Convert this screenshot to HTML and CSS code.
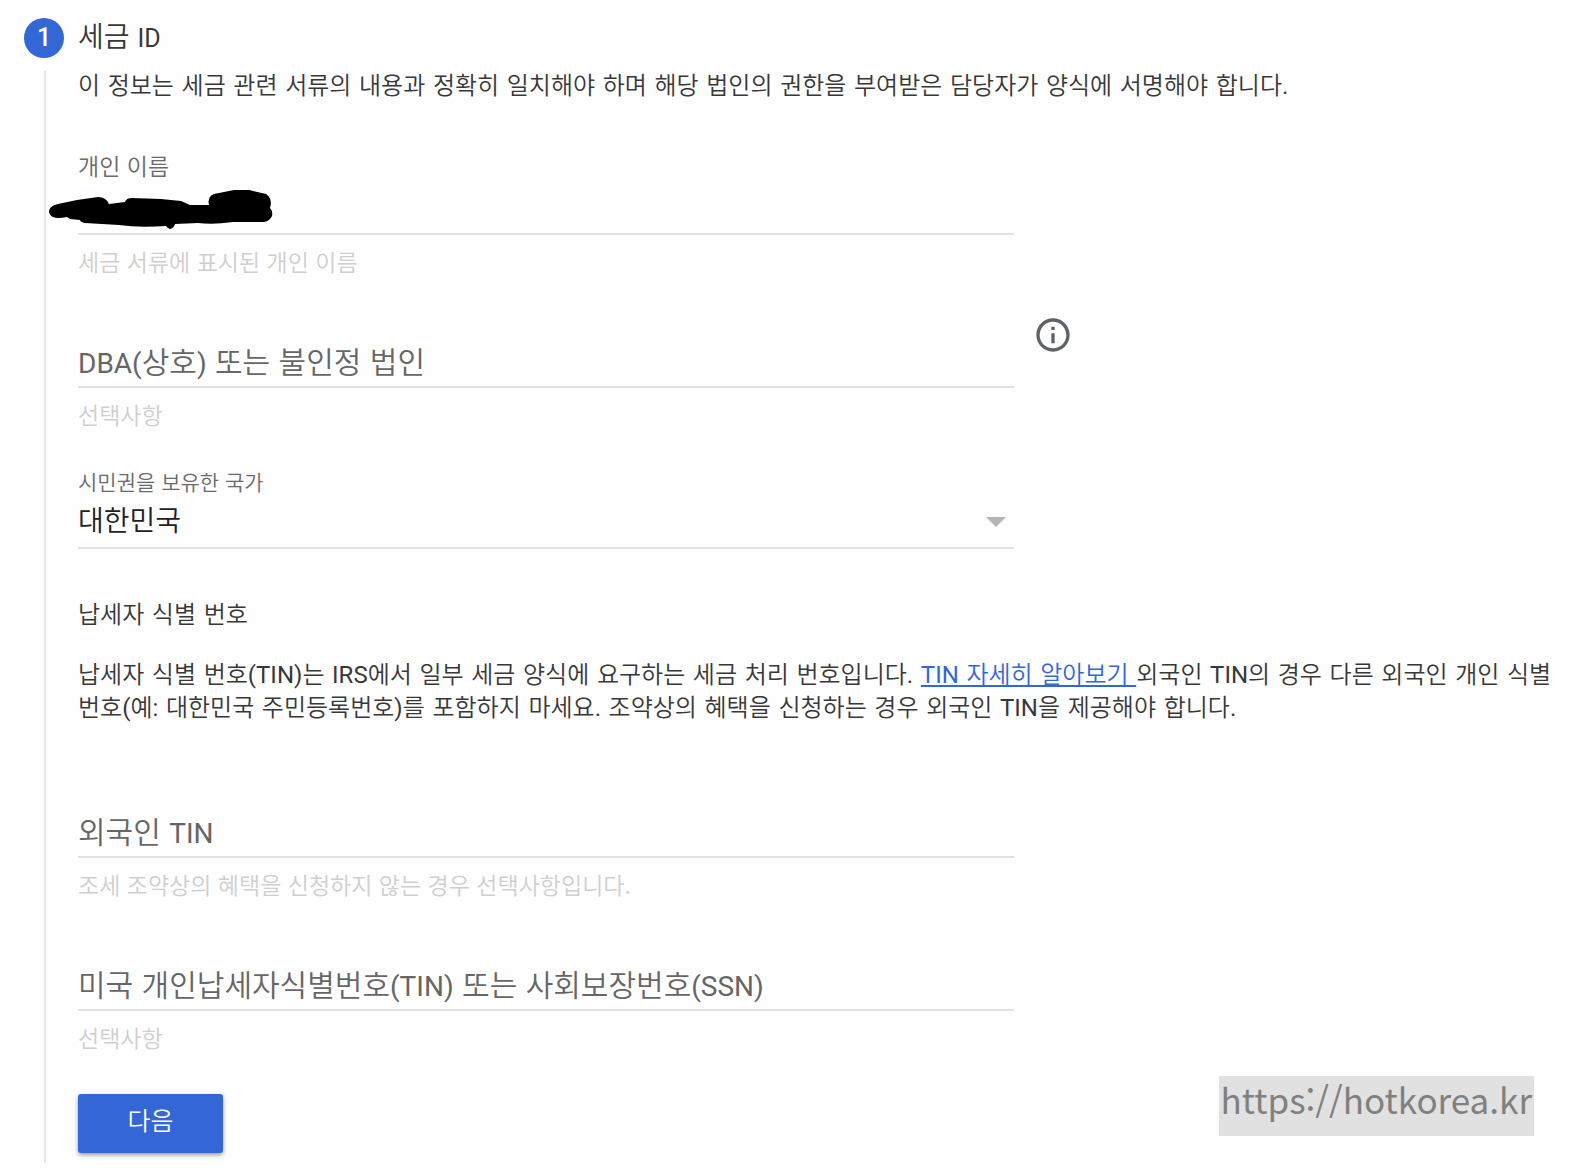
FILE: index.html
```html
<!DOCTYPE html>
<html lang="ko">
<head>
<meta charset="utf-8">
<meta name="viewport" content="width=device-width, initial-scale=1">
<title>세금 ID</title>
<link rel="stylesheet" href="styles.css">
</head>
<body>
<main class="step">
  <header class="step-header">
    <span class="step-number">1</span>
    <h1 class="step-title">세금 <span class="latin">ID</span></h1>
  </header>
  <div class="step-body">
    <div class="rail"></div>
    <form class="content">
      <p class="text">이 정보는 세금 관련 서류의 내용과 정확히 일치해야 하며 해당 법인의 권한을 부여받은 담당자가 양식에 서명해야 합니다<span class="latin">.</span></p>

      <div class="field field-name">
        <label class="label" for="name">개인 이름</label>
        <div class="control">
          <input class="input" id="name" type="text">
          <svg class="scribble" viewBox="0 0 224 40" aria-hidden="true">
            <path d="M0 21C1 17 4 15 9 14L28 10L49 7Q57 7 60 14L76 12Q77 8 83 8L112 9L132 11L141 15L160 15Q158 7 165 4L185 0Q195-2 204 1L217 4Q224 9 221 18Q224 21 223 26Q221 31 215 32L184 32Q164 35 149 33L126 34Q125 38 121 39Q118 38 117 36Q90 38 70 35L36 33Q31 32 31 30L21 29L18 27Q8 29 4 27Q0 25 0 21Z"/>
          </svg>
        </div>
        <p class="hint">세금 서류에 표시된 개인 이름</p>
      </div>

      <div class="field-row">
        <div class="field field-floating">
          <div class="control">
            <label class="float-label" for="dba"><span class="latin">DBA(</span>상호<span class="latin">)</span> 또는 불인정 법인</label>
            <input class="input" id="dba" type="text">
          </div>
          <p class="hint">선택사항</p>
        </div>
        <button class="info" type="button" aria-label="도움말">
          <svg class="info-icon" viewBox="0 0 24 24" aria-hidden="true"><path d="M11 7h2v2h-2zm0 4h2v6h-2zm1-9C6.480 2 2 6.480 2 12s4.480 10 10 10 10-4.480 10-10S17.520 2 12 2zm0 18c-4.410 0-8-3.590-8-8s3.590-8 8-8 8 3.590 8 8-3.590 8-8 8z"/></svg>
        </button>
      </div>

      <div class="field field-country">
        <label class="label label-small" for="country">시민권을 보유한 국가</label>
        <div class="control">
          <select class="select" id="country"><option>대한민국</option></select>
          <svg class="arrow" viewBox="0 0 20 10" aria-hidden="true"><path d="M0 0h20L10 10z"/></svg>
        </div>
      </div>

      <h2 class="text section-title">납세자 식별 번호</h2>
      <p class="text">납세자 식별 번호<span class="latin">(TIN)</span>는 <span class="latin">IRS</span>에서 일부 세금 양식에 요구하는 세금 처리 번호입니다<span class="latin">.</span> <a class="link" href="#ftin"><span class="latin">TIN</span> 자세히 알아보기 </a>외국인 <span class="latin">TIN</span>의 경우 다른 외국인 개인 식별 번호<span class="latin">(</span>예<span class="latin">:</span> 대한민국 주민등록번호<span class="latin">)</span>를 포함하지 마세요<span class="latin">.</span> 조약상의 혜택을 신청하는 경우 외국인 <span class="latin">TIN</span>을 제공해야 합니다<span class="latin">.</span></p>

      <div class="field field-floating field-foreign">
        <div class="control">
          <label class="float-label" for="ftin">외국인 <span class="latin">TIN</span></label>
          <input class="input" id="ftin" type="text">
        </div>
        <p class="hint">조세 조약상의 혜택을 신청하지 않는 경우 선택사항입니다.</p>
      </div>

      <div class="field field-floating field-ssn">
        <div class="control">
          <label class="float-label" for="ssn">미국 개인납세자식별번호<span class="latin">(TIN)</span> 또는 사회보장번호<span class="latin">(SSN)</span></label>
          <input class="input" id="ssn" type="text">
        </div>
        <p class="hint">선택사항</p>
      </div>

      <button class="next" type="button">다음</button>
    </form>
  </div>
</main>
<div class="watermark">https://hotkorea.kr</div>
</body>
</html>
```
FILE: styles.css
```css
* {
  box-sizing: border-box;
}

body {
  position: relative;
  margin: 0;
  background: #fefefe;
  color: #383838;
  font-family: "Noto Sans CJK KR", sans-serif;
  font-weight: 350;
  font-size: 25px;
  line-height: 33px;
  word-break: keep-all;
}

h1,
h2,
p {
  margin: 0;
  font-weight: inherit;
}

.text {
  padding-top: 2px;
  margin-bottom: -2px;
  font-family: "DejaVu Sans", "Noto Sans CJK KR", sans-serif;
  font-size: 24px;
}

.latin {
  font-family: Roboto, sans-serif;
  font-size: 24px;
  font-weight: 400;
  line-height: 1;
}

.step {
  padding: 18px 20px 13px 24px;
}

.step-header,
.step-body {
  display: grid;
  grid-template-columns: 40px minmax(0, 1fr);
  column-gap: 14px;
}

.step-number {
  height: 40px;
  border-radius: 50%;
  background: #3367d6;
  color: #fff;
  font-family: Roboto, sans-serif;
  font-size: 25px;
  font-weight: 500;
  line-height: 39px;
  text-align: center;
}

.step-title {
  font-size: 28px;
  line-height: 34px;
}

.step-title .latin {
  font-size: 25px;
}

.step-body {
  padding-top: 10px;
}

.rail {
  width: 2px;
  margin: 3px 0 0 20px;
  background: #e6e6e6;
}

.content {
  padding-bottom: 10px;
}

.field {
  width: 100%;
  max-width: 936px;
}

.control {
  display: grid;
  align-items: end;
}

.control > * {
  grid-area: 1 / 1;
}

.label {
  display: block;
  color: #6a6a6a;
  font-size: 23px;
  line-height: 28px;
}

.label-small {
  font-size: 21px;
}

.input,
.select {
  width: 100%;
  height: 56px;
  padding: 0;
  border: 0;
  border-bottom: 2px solid #e2e2e2;
  border-radius: 0;
  outline: 0;
  background: transparent;
  color: #212121;
  font: inherit;
  font-size: 28px;
}

.select {
  height: 54px;
  padding-bottom: 4px;
  appearance: none;
}

.float-label {
  padding-bottom: 8px;
  color: #666;
  font-size: 30px;
  line-height: 40px;
}

.float-label .latin {
  font-size: 28px;
}

.hint {
  margin-top: 12px;
  color: #cfcfcf;
  font-size: 23px;
  line-height: 28px;
}

.field-name {
  margin-top: 50px;
}

.scribble {
  position: absolute;
  top: 190px;
  left: 49px;
  width: 224px;
  height: 40px;
}

.field-floating {
  padding-top: 17px;
}

.field-row {
  display: flex;
  align-items: flex-start;
  gap: 19px;
  margin-top: 40px;
}

.info {
  flex: none;
  padding: 0;
  border: 0;
  background: none;
}

.info-icon {
  display: block;
  width: 40px;
  height: 40px;
  fill: #5f6368;
}

.field-country {
  margin-top: 39px;
}

.arrow {
  justify-self: end;
  align-self: center;
  width: 20px;
  height: 10px;
  margin-right: 8px;
  fill: #b4b4b4;
  pointer-events: none;
}

.section-title {
  margin: 48px 0 25px;
}

.link {
  color: #3367d6;
  text-decoration: underline;
}

.field-foreign {
  margin-top: 62px;
}

.field-ssn {
  margin-top: 40px;
}

.next {
  display: block;
  width: 145px;
  height: 59px;
  margin-top: 43px;
  padding: 0 0 8px;
  border: 0;
  border-radius: 3px;
  background: #3367d6;
  box-shadow: 0 2px 4px rgba(0, 0, 0, 0.4);
  color: #fff;
  font: inherit;
}

.watermark {
  position: absolute;
  right: 40px;
  bottom: 40px;
  height: 60px;
  padding: 0 2px;
  background: #e1e1e1;
  color: #808080;
  font-size: 35px;
  font-weight: 400;
  line-height: 46px;
}
```
